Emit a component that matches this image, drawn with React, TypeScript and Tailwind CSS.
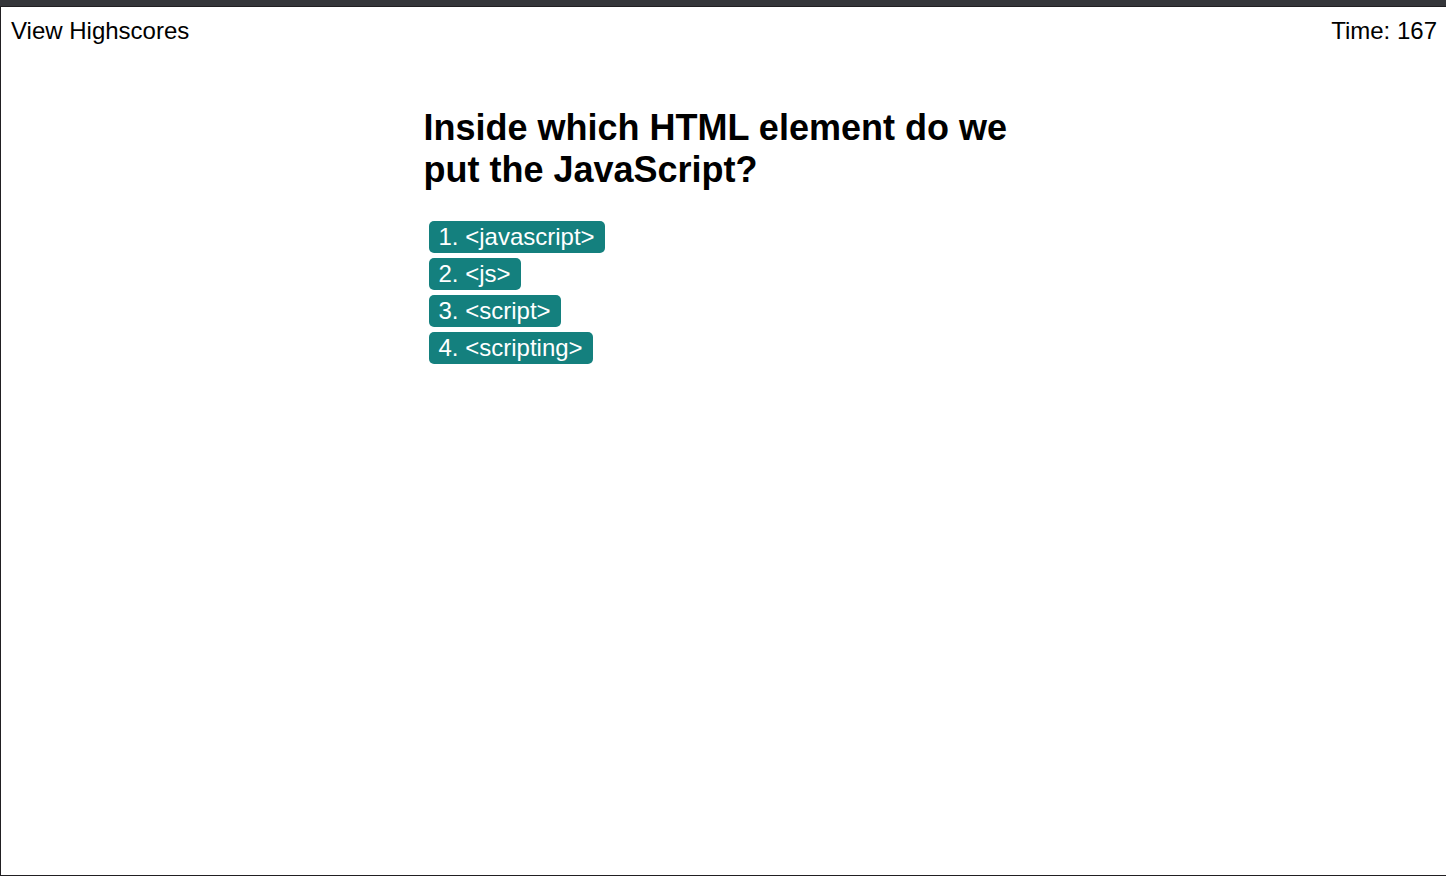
const answers = ["<javascript>", "<js>", "<script>", "<scripting>"];

export default function App() {
  return (
    <div className="flex min-h-screen flex-col border-t-6 border-[#35363a] bg-white font-['Liberation_Sans',Arial,sans-serif] text-2xl text-black">
      <div className="flex flex-1 flex-col border-t border-b border-l border-[#211f22]">
        <header className="flex justify-between py-[10px] pr-[9px] pl-[10px] leading-7">
          <a href="#highscores">View Highscores</a>
          <div>Time: 167</div>
        </header>
        <main className="mx-auto mt-[52px] w-full max-w-[600px]">
          <h1 className="text-4xl leading-[42px] font-bold">Inside which HTML element do we put the JavaScript?</h1>
          <ol className="mt-[30px] flex flex-col items-start gap-[5px] pl-[5px]">
            {answers.map((answer, index) => (
              <li key={answer}>
                <button type="button" className="block h-8 rounded-[5px] bg-[#14807e] px-[10px] leading-8 text-white">
                  {index + 1}. {answer}
                </button>
              </li>
            ))}
          </ol>
        </main>
      </div>
    </div>
  );
}
